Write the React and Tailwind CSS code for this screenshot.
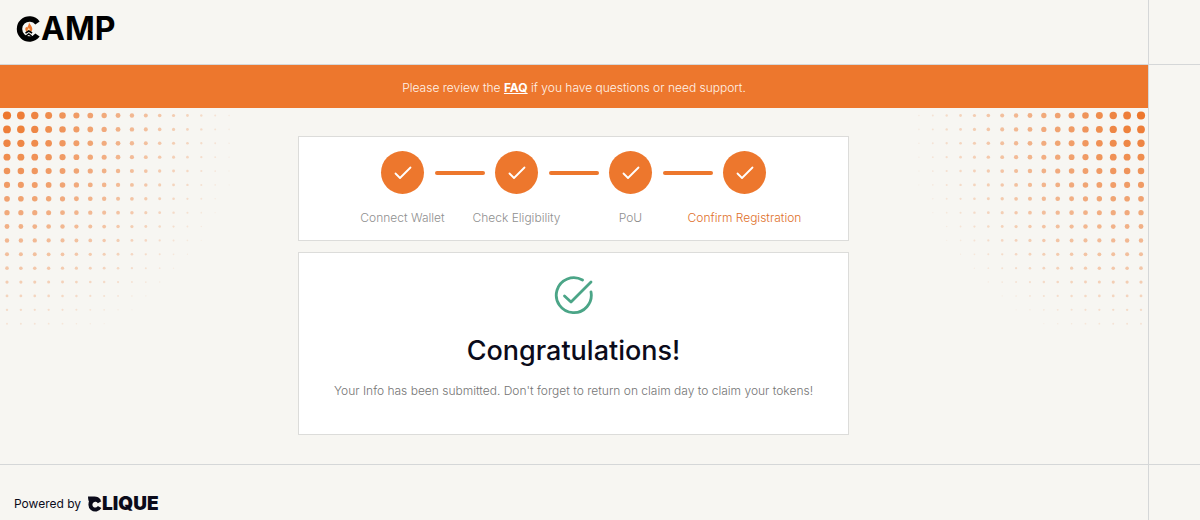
const steps = [
    { label: "Connect Wallet", current: false },
    { label: "Check Eligibility", current: false },
    { label: "PoU", current: false },
    { label: "Confirm Registration", current: true },
];

// dots shrink and fade with the distance from the corner
const dots = [];
for (let row = 0; row < 16; row++) {
    for (let col = 0; col < 17; col++) {
        const t = 1 - Math.sqrt(col * col + row * row) / 16.8;
        if (t > 0) dots.push({ x: 7 + col * 13.88, y: 7.5 + row * 13.88, r: 0.6 + 3.5 * t, o: Math.min(1, t * 0.95 + 0.05) });
    }
}

const Dots = ({ className }) => (
    <svg className={className} viewBox="0 0 240 224" width="240" height="224" aria-hidden="true">
        {dots.map((d, i) => (
            <circle key={i} cx={d.x} cy={d.y} r={d.r} fill="#ed772d" opacity={d.o} />
        ))}
    </svg>
);

const CampLogo = () => (
    <a href="#" aria-label="Camp" className="flex items-center text-black">
        <svg width="25" height="26" viewBox="0 0 25 26" aria-hidden="true">
            <path d="M21.500 7A10 10 0 1 0 21.500 19" fill="none" stroke="currentColor" strokeWidth="5.400" />
            <path d="M13 6c.5 2.500 3.300 4 3.300 7 0 1.500-.6 2.300-1.500 2.800h-4c-.7-.6-1.500-1.400-1.500-2.800 0-1 .5-1.800 1-2.300l.8 1c.9-1.500 1.900-3 1.900-5.700z" fill="#ed772d" />
            <path d="M12.800 11.500c.4 1.200 1.400 1.800 1.200 3.500h-2.600c-.2-1.500 1-2 1.400-3.500z" fill="#ffd9a0" />
            <path d="m9.500 17 3.300-2 3.300 2M10 20l2.800-2 2.800 2" fill="none" stroke="currentColor" strokeWidth="1.500" />
        </svg>
        <span className="text-[32px] leading-8 font-bold">AMP</span>
    </a>
);

const CliqueLogo = () => (
    <a href="#" aria-label="Clique" className="flex items-center text-[#0b0b1a]">
        <svg width="15" height="16" viewBox="0 0 15 16" aria-hidden="true">
            <path d="M12.600 6.300A4.900 4.900 0 1 0 12.600 11" fill="none" stroke="currentColor" strokeWidth="4" />
            <path d="M1 .500h6.500C10 .500 12.500 1.500 13.800 4L8 5 3 7C1.500 5.500 1 3 1 .500z" fill="currentColor" />
        </svg>
        <span className="text-[19px] leading-5 font-black">LIQUE</span>
    </a>
);

const Step = ({ label, current }) => (
    <li className="flex w-[114px] flex-col items-center gap-4">
        <span className="flex size-[43px] items-center justify-center rounded-full bg-[#ed772d]">
            <svg width="18" height="14" viewBox="0 0 18 14" fill="none" stroke="white" strokeWidth="1.800" strokeLinecap="round" strokeLinejoin="round" aria-hidden="true">
                <path d="m1.500 7.500 4.500 4.500L16.500 1.500" />
            </svg>
        </span>
        <span className={current ? "whitespace-nowrap text-[#e0702a]" : "whitespace-nowrap text-[#8f8f8f]"}>{label}</span>
    </li>
);

const App = () => {
    return (
        <div className="flex min-h-screen flex-col bg-[#f7f6f2] font-[Inter,sans-serif] text-xs leading-4 font-light">
            <div className="box-content flex h-16 shrink-0 border-b border-[#d5d7d8]">
                <header className="flex flex-1 items-center border-r border-[#d5d7d8] px-4 pb-[6px]">
                    <CampLogo />
                </header>
                <div className="w-[51px]" />
            </div>

            <div className="flex flex-1">
                <div className="flex min-w-0 flex-1 flex-col border-r border-[#d5d7d8]">
                    <p className="bg-[#ed772d] pt-[15px] pb-3 text-center text-[#fff3ea]">
                        Please review the{" "}
                        <a href="#" className="font-bold text-white underline">
                            FAQ
                        </a>{" "}
                        if you have questions or need support.
                    </p>

                    <main className="relative flex flex-1 flex-col items-center gap-[11px] pt-7 pr-px pb-7">
                        <Dots className="absolute top-0 left-0" />
                        <Dots className="absolute top-0 right-0 -scale-x-100" />

                        <section className="relative w-full max-w-[551px] border border-[#dcdcda] bg-white py-[14px]">
                            <ol className="relative flex justify-center">
                                {steps.map((step) => (
                                    <Step key={step.label} {...step} />
                                ))}
                            </ol>
                            <div className="absolute inset-x-0 top-[34px] flex justify-center gap-16" aria-hidden="true">
                                <span className="h-1 w-[50px] rounded-full bg-[#ed772d]" />
                                <span className="h-1 w-[50px] rounded-full bg-[#ed772d]" />
                                <span className="h-1 w-[50px] rounded-full bg-[#ed772d]" />
                            </div>
                        </section>

                        <section className="relative flex w-full max-w-[551px] flex-col items-center border border-[#dcdcda] bg-white px-6 pt-[23px] pb-[35px]">
                            <svg width="40" height="40" viewBox="0 0 40 40" fill="none" stroke="#4ba587" strokeWidth="2.800" strokeLinecap="round" strokeLinejoin="round" aria-hidden="true">
                                <path d="M28.500 4A17.500 17.500 0 1 0 37 16" />
                                <path d="m10.500 20 6.500 6L37 6" />
                            </svg>
                            <h1 className="mt-[17px] text-[27px] leading-9 font-medium text-[#0b0b1a]">Congratulations!</h1>
                            <p className="mt-[14px] text-[#757575]">Your Info has been submitted. Don't forget to return on claim day to claim your tokens!</p>
                        </section>
                    </main>
                </div>
                <div className="w-[51px]" />
            </div>

            <div className="flex h-14 shrink-0 border-t border-[#d5d7d8]">
                <footer className="flex flex-1 items-center gap-[6px] border-r border-[#d5d7d8] px-[14px] pt-[22px] font-normal text-[#0b0b1a]">
                    <span>Powered by</span>
                    <CliqueLogo />
                </footer>
                <div className="w-[51px]" />
            </div>
        </div>
    );
};
export default App;
